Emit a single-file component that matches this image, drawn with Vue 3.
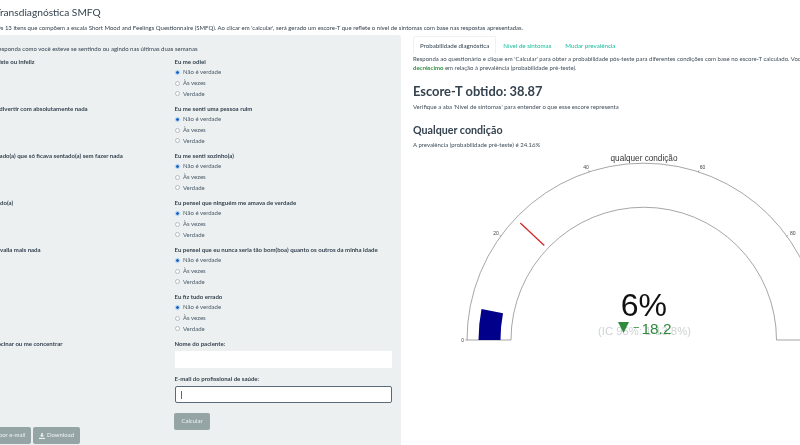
<script setup>
const radios = ['Não é verdade', 'Às vezes', 'Verdade']
const leftQuestions = [
  'Eu me senti triste ou infeliz',
  'Não pude me divertir com absolutamente nada',
  'Senti tão cansado(a) que só ficava sentado(a) sem fazer nada',
  'Eu fiquei agitado(a)',
  'Senti que não valia mais nada',
  '',
  'Foi difícil raciocinar ou me concentrar'
]
const rightQuestions = [
  'Eu me odiei',
  'Eu me senti uma pessoa ruim',
  'Eu me senti sozinho(a)',
  'Eu pensei que ninguém me amava de verdade',
  'Eu pensei que eu nunca seria tão bom(boa) quanto os outros da minha idade',
  'Eu fiz tudo errado'
]
const cx = 643.8
const cy = 339
const ticks = [
  { label: '0', v: 0, lx: 462.7, ly: 339 },
  { label: '20', v: 20, lx: 496, ly: 232.5 },
  { label: '40', v: 40, lx: 586, ly: 165.8 },
  { label: '60', v: 60, lx: 702.5, ly: 165.8 },
  { label: '80', v: 80, lx: 792.7, ly: 232.6 }
].map((t) => {
  const a = Math.PI * (1 - t.v / 100)
  const p = (r) => [cx + r * Math.cos(a), cy - r * Math.sin(a)]
  const [x1, y1] = p(176.5)
  const [x2, y2] = p(178.5)
  return { ...t, x1, y1, x2, y2 }
})
</script>

<template>
  <div class="page">
    <h1 class="title">Transdiagnóstica SMFQ</h1>
    <p class="intro">Os 13 itens que compõem a escala Short Mood and Feelings Questionnaire (SMFQ). Ao clicar em 'calcular', será gerado um escore-T que reflete o nível de sintomas com base nas respostas apresentadas.</p>
    <div class="layout">
      <aside class="sidebar">
        <p class="lead">Responda como você esteve se sentindo ou agindo nas últimas duas semanas</p>
        <div class="columns">
          <div class="col-left">
            <div v-for="(q, i) in leftQuestions" :key="i" class="row">
              <label class="q">{{ q }}</label>
            </div>
            <div class="actions">
              <button class="btn">Enviar por e-mail</button>
              <button class="btn">
                <svg class="dl" viewBox="0 0 12 12"><path d="M4.500 0h3v4.500h2.500L6 8.500 2 4.500h2.500zM0 9.500h3.500L6 10.500l2.500-1H12V12H0z" fill="currentColor"/></svg>
                Download
              </button>
            </div>
          </div>
          <div class="col-right">
            <div v-for="(q, i) in rightQuestions" :key="i" class="row">
              <label class="q">{{ q }}</label>
              <div v-for="(r, j) in radios" :key="r" class="opt">
                <input class="radio" type="radio" :name="'q' + i" :checked="j === 0" />
                <span>{{ r }}</span>
              </div>
            </div>
            <div class="field">
              <label class="q">Nome do paciente:</label>
              <input class="text" type="text" />
            </div>
            <div class="field">
              <label class="q">E-mail do profissional de saúde:</label>
              <div class="text focus"><span class="caret"></span></div>
            </div>
            <button class="btn calc">Calcular</button>
          </div>
        </div>
      </aside>
      <main class="main">
        <nav class="tabs">
          <a class="tab active">Probabilidade diagnóstica</a>
          <a class="tab">Nível de sintomas</a>
          <a class="tab">Mudar prevalência</a>
        </nav>
        <p class="para">Responda ao questionário e clique em 'Calcular' para obter a probabilidade pós-teste para diferentes condições com base no escore-T calculado. Você verá um acréscimo ou<br /><b class="green">decréscimo</b> em relação à prevalência (probabilidade pré-teste).</p>
        <h2 class="score">Escore-T obtido: 38.87</h2>
        <p class="para check">Verifique a aba 'Nível de sintomas' para entender o que esse escore representa</p>
        <h3 class="cond">Qualquer condição</h3>
        <p class="para prev">A prevalência (probabilidade pré-teste) é 24.16%</p>
        <svg class="gauge" viewBox="413 150 470 200" width="470" height="200">
          <text x="644" y="159.500" class="g-title" text-anchor="middle">qualquer condição</text>
          <path d="M467 339A176.800 176.800 0 0 1 820.600 339H776.500A132.700 132.700 0 0 0 511 339Z" fill="#fff" stroke="#808080" stroke-width="0.7" />
          <path d="M478.500 339A165 165 0 0 1 481.500 308.100L503 312.200A143 143 0 0 0 500.500 339Z" fill="#00008b" />
          <line x1="520.300" y1="222" x2="544.300" y2="244.500" stroke="#d02a2a" stroke-width="1.300" />
          <g v-for="t in ticks" :key="t.v">
            <line :x1="t.x1" :y1="t.y1" :x2="t.x2" :y2="t.y2" stroke="#666" stroke-width="0.5" />
            <text :x="t.lx" :y="t.ly + 1.7" class="g-tick" text-anchor="middle">{{ t.label }}</text>
          </g>
          <text x="643.800" y="315" class="g-value" text-anchor="middle">6%</text>
          <text x="644.500" y="334" class="g-ci" text-anchor="middle">(IC 95%: 1-13.8%)</text>
          <polygon points="618,321 629,321 623.500,332" fill="#2f8a3c" />
          <text x="633.500" y="329" class="g-minus">–</text>
          <text x="641.500" y="332.500" class="g-delta">18.2</text>
        </svg>
      </main>
    </div>
  </div>
</template>

<style scoped>
.page {
  width: 1300px;
  height: 445px;
  margin-left: -60px;
  overflow: hidden;
  font-family: Lato, "Liberation Sans", sans-serif;
  font-size: 6px;
  line-height: 1.4;
  color: #35434f;
  filter: blur(0.35px);
}
.title {
  margin: 0;
  height: 22px;
  padding: 3px 0 0 55px;
  font-size: 10.200px;
  line-height: 19px;
  font-weight: 400;
}
.intro {
  margin: 0;
  height: 10px;
  padding-left: 56px;
  font-size: 6px;
  line-height: 5px;
  white-space: nowrap;
}
.layout {
  display: flex;
  height: 410px;
}
.sidebar {
  width: 461px;
  flex: none;
  box-sizing: border-box;
  background: #ecf0f1;
  border-radius: 0 3px 0 0;
  padding: 9px 0 0 22px;
}
.lead {
  margin: 0 0 2.500px 33px;
  height: 10px;
  line-height: 10px;
  white-space: nowrap;
}
.columns {
  display: flex;
}
.col-left {
  width: 212.500px;
  flex: none;
}
.col-right {
  width: 218px;
  flex: none;
}
.row {
  height: 47px;
}
.q {
  display: block;
  height: 10.500px;
  line-height: 10px;
  font-weight: 700;
  font-size: 6.050px;
  white-space: nowrap;
}
.opt {
  display: flex;
  align-items: center;
  height: 10.700px;
  gap: 3px;
  color: #4a5a68;
}
.radio {
  appearance: none;
  width: 5px;
  height: 5px;
  margin: 0 0 0 0.500px;
  border-radius: 50%;
  border: 0.5px solid #b4bcc0;
  background: #fff;
  box-sizing: border-box;
}
.radio:checked {
  border: 1.2px solid #cfe2f7;
  background: #1866c4;
  box-shadow: 0 0 0 0.5px #d6e6f8;
}
.field {
  height: 35px;
}
.text {
  display: block;
  width: 217px;
  height: 17px;
  margin-top: 2px;
  background: #fff;
  border: 0;
  padding: 0;
  box-sizing: border-box;
  position: relative;
}
.focus {
  border: 0.8px solid #5a6b78;
  border-radius: 2px;
}
.caret {
  position: absolute;
  left: 5.500px;
  top: 4px;
  width: 0.7px;
  height: 8px;
  background: #5a6b78;
}
.btn {
  font: inherit;
  color: #edf1f1;
  background: #95a5a6;
  border: 0;
  border-radius: 2px;
  height: 17px;
  padding: 0 6px;
  display: inline-flex;
  align-items: center;
  gap: 1.500px;
  white-space: nowrap;
}
.calc {
  width: 36px;
  justify-content: center;
  padding: 0;
  margin-top: 4.500px;
  margin-left: -0.500px;
}
.actions {
  display: flex;
  justify-content: flex-end;
  gap: 2px;
  margin-top: 41.500px;
  width: 118px;
}
.dl {
  width: 6px;
  height: 6px;
}
.main {
  flex: none;
  width: 800px;
  margin-left: 12px;
}
.tabs {
  display: flex;
  height: 18px;
  margin-top: 1px;
  align-items: center;
}
.tab {
  box-sizing: border-box;
  height: 18px;
  padding: 0 6px;
  border: 1px solid transparent;
  border-bottom: 0;
  color: #18bc9c;
  line-height: 18px;
  font-size: 6.200px;
  white-space: nowrap;
}
.tab.active {
  color: #35434f;
  border-color: #eff2f3;
  border-radius: 2px 2px 0 0;
}
.para {
  margin: 0;
  font-size: 6px;
  line-height: 9px;
  white-space: nowrap;
  color: #3f4e5b;
}
.green {
  color: #2e8b3d;
}
.score {
  margin: 9px 0 0;
  height: 20px;
  font-size: 12.900px;
  line-height: 20px;
  font-weight: 700;
}
.check {
  margin-top: 0.500px;
}
.cond {
  margin: 11px 0 0;
  font-size: 10.700px;
  line-height: 16px;
  height: 16px;
  font-weight: 700;
}
.prev {
  margin-top: 2.500px;
}
.gauge {
  display: block;
  margin-top: 1.500px;
  font-family: "Liberation Sans", Arial, sans-serif;
}
.g-title {
  font-size: 8.200px;
  fill: #333;
}
.g-tick {
  font-size: 5px;
  fill: #444;
}
.g-value {
  font-size: 32px;
  fill: #111;
}
.g-ci {
  font-size: 11.300px;
  fill: #cfd3d3;
}
.g-minus {
  font-size: 10px;
  fill: #2f8a3c;
}
.g-delta {
  font-size: 15.400px;
  fill: #2f8a3c;
}
</style>

<style>
html, body {
  margin: 0;
  overflow: hidden;
  background: #fff;
}
</style>
